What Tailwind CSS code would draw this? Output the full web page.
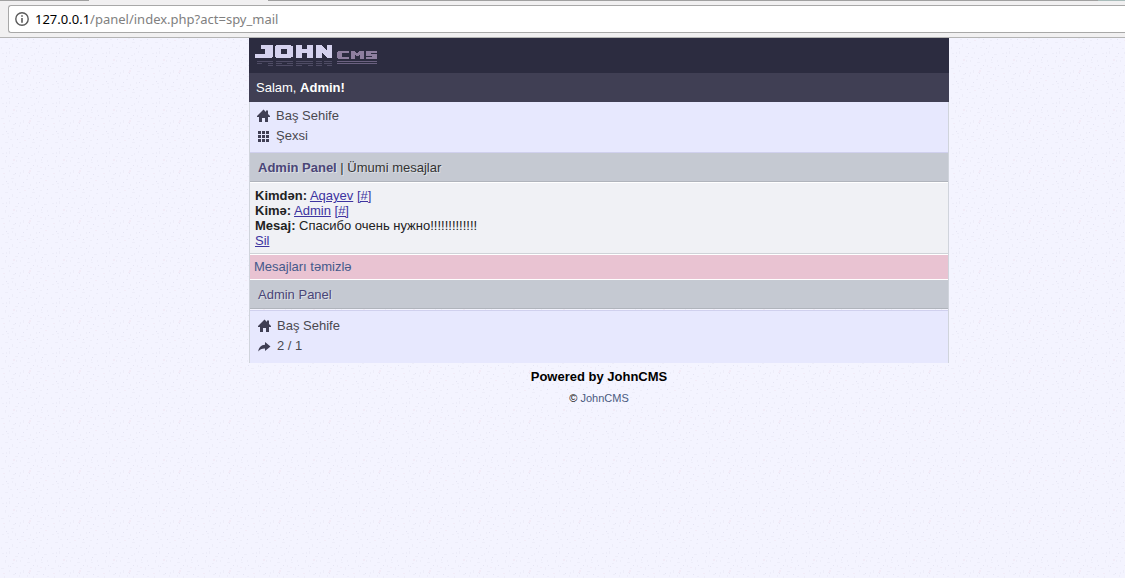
<!DOCTYPE html>
<html lang="az">
<head>
	<meta charset="utf-8">
	<meta name="viewport" content="width=device-width, initial-scale=1">
	<title>Admin Panel</title>
	<script src="https://cdn.jsdelivr.net/npm/@tailwindcss/browser@4"></script>
</head>
<body class="relative isolate min-h-screen overflow-x-hidden bg-[#f4f4ff] font-['Liberation_Sans',Arial,sans-serif] text-[13px] leading-[15px] text-[#222]">
	<!-- paper texture, 50px tile -->
	<svg class="absolute inset-0 -z-10 h-full w-full" aria-hidden="true">
		<defs>
			<pattern id="paper" width="50" height="50" patternUnits="userSpaceOnUse" shape-rendering="crispEdges">
				<path fill="#ededf9" d="M2 3h2v1h-2zM9 1h1v3h-1zM15 6h3v1h-3zM24 2h1v2h-1zM31 5h2v1h-2zM38 1h1v2h-1zM44 4h3v1h-3zM5 10h1v3h-1zM12 13h2v1h-2zM20 10h1v2h-1zM27 12h3v1h-3zM35 9h1v3h-1zM41 12h2v1h-2zM47 10h1v2h-1zM1 18h3v1h-3zM9 20h1v2h-1zM16 17h2v1h-2zM23 20h1v3h-1zM30 18h2v1h-2zM37 21h3v1h-3zM45 17h1v3h-1zM4 26h1v2h-1zM11 28h3v1h-3zM19 25h1v2h-1zM26 29h2v1h-2zM33 26h1v3h-1zM40 28h2v1h-2zM47 26h2v1h-2zM2 34h2v1h-2zM8 36h1v2h-1zM15 33h1v3h-1zM21 36h3v1h-3zM30 34h1v2h-1zM36 37h2v1h-2zM43 34h1v3h-1zM5 42h3v1h-3zM12 44h1v3h-1zM19 42h2v1h-2zM26 45h1v2h-1zM32 42h3v1h-3zM39 45h1v2h-1zM46 43h2v1h-2zM1 47h1v2h-1zM22 48h2v1h-2zM6 2h1v2h-1zM21 7h2v1h-2zM34 3h1v2h-1zM41 9h1v2h-1zM16 10h1v2h-1zM8 15h1v2h-1zM24 15h2v1h-2zM37 15h1v2h-1zM20 22h1v2h-1zM13 24h2v1h-2zM27 25h1v2h-1zM36 24h2v1h-2zM7 33h2v1h-2zM12 31h1v2h-1zM36 32h1v2h-1zM28 38h2v1h-2zM40 40h2v1h-2zM10 39h2v1h-2zM16 47h2v1h-2zM43 47h1v2h-1zM30 47h2v1h-2z"/>
				<path fill="#e4e4f3" d="M6 6h1v1h-1zM18 3h1v1h-1zM28 8h1v1h-1zM42 7h1v1h-1zM10 16h1v1h-1zM33 15h1v1h-1zM48 15h1v1h-1zM15 23h1v1h-1zM29 23h1v1h-1zM43 24h1v1h-1zM6 31h1v1h-1zM23 32h1v1h-1zM39 32h1v1h-1zM17 39h1v1h-1zM33 39h1v1h-1zM47 39h1v1h-1zM9 48h1v1h-1zM36 48h1v1h-1z"/>
				<path fill="#f2ebf7" d="M29 20h2v2h-2zM28 22h2v1h-2zM13 9h2v2h-2zM40 17h2v1h-2zM3 23h2v1h-2zM45 30h2v1h-2zM24 40h2v1h-2z"/>
			</pattern>
		</defs>
		<rect width="100%" height="100%" fill="url(#paper)"/>
	</svg>

	<!-- browser bar, with the bottom edge of the tab strip -->
	<div class="h-[38px] border-b border-[#b4b4b4] bg-[#f1f0f1]">
		<div class="flex h-px">
			<div class="w-[89px] bg-[#a0a0a0]"></div>
			<div class="w-[179px]"></div>
			<div class="grow bg-[#a0a0a0]"></div>
			<div class="w-[27px] bg-[#a9bcba]"></div>
		</div>
		<div class="mt-1 ml-2 flex h-7 items-center rounded-l-[3px] border border-r-0 border-[#a8a8a8] bg-white pl-1.5 font-['Noto_Sans','Open_Sans',sans-serif]">
			<svg class="h-[14px] w-[14px] shrink-0" viewBox="0 0 14 14" aria-hidden="true">
				<circle cx="7" cy="7" r="6.2" fill="none" stroke="#5a5a5a" stroke-width="1.4"/>
				<path fill="#5a5a5a" d="M6.2 3.3h1.6v1.5H6.2zM6.2 6h1.6v4.8H6.2z"/>
			</svg>
			<label for="url" class="ml-[6px] text-black">127.0.0.1</label>
			<input id="url" type="text" value="/panel/index.php?act=spy_mail" class="h-5 min-w-0 grow text-[#808080] outline-none">
		</div>
	</div>

	<div class="pl-[73px]">
		<div class="mx-auto max-w-[700px]">
			<div class="h-[35px] bg-[#2c2c40] pt-[7px] pl-[6px]">
				<a href="#" aria-label="JohnCMS">
					<svg class="h-[22px] w-[123px]" viewBox="0 0 123 22" shape-rendering="crispEdges" aria-hidden="true">
						<g fill="#d5d2ee">
							<path d="M6 0h12v12h-1v1H0V9h10V4H6z"/>
							<path fill-rule="evenodd" d="M21 0h15v1h2v11h-2v1H21v-1h-1V1h1zM26 4v5h6V4z"/>
							<path d="M41 0h6v4h5V0h6v13h-6V8h-5v5h-6z"/>
							<path d="M61 0h6v1h1v1h1v1h1v1h1v1h1V0h5v13h-5v-1h-1v-1h-1v-1h-1V9h-1V8h-1v5h-6z"/>
						</g>
						<g fill="#8e7f9f">
							<path d="M83 6h11v2h-7v4h7v2H83v-1h-1V7h1z"/>
							<path d="M96 6h4v1h1v1h2V7h1V6h5v8h-4v-4h-1v1h-3v-1h-1v4h-4z"/>
							<path d="M111 6h11v2h-6v1h6v5h-11v-2h6v-1h-6z"/>
						</g>
						<path fill="#4f4c65" d="M2 16h16v1H2zM21 16h17v1H21zM41 16h17v1H41zM61 16h6v1h-6zM69 16h8v1h-8zM2 18h5v1H2zM13 18h5v1h-5zM21 18h6v1h-6zM32 18h6v1h-6zM41 18h17v1H41zM61 18h6v1h-6zM69 18h8v1h-8zM13 20h5v1h-5zM21 20h17v1H21zM41 20h6v1h-6zM53 20h5v1h-5zM61 20h6v1h-6zM72 20h5v1h-5z"/>
						<path fill="#6b6180" d="M82 16h40v1H82zM82 18h40v1H82z"/>
					</svg>
				</a>
			</div>
			<div class="bg-[#403f54] px-[7px] py-[7px] text-white">Salam, <b>Admin!</b></div>

			<div class="border-x border-[#d0d4dc]">
				<ul class="border-b border-b-[#d0d0ee] bg-[#e7e8fe] px-[7px] pt-1 pb-[6px] leading-5 text-[#4a4850]">
					<li class="flex items-center gap-[6px]">
						<svg class="h-[14px] w-[13px]" viewBox="0 0 13 14" fill="#403f54" aria-hidden="true"><path d="M6.500 .5 9 3V1.500h2V5l2 2v1h-2v5H8V9H5v4H2V8H0V7z"/></svg>
						<a href="#">Baş Sehife</a>
					</li>
					<li class="flex items-center gap-[6px]">
						<svg class="h-[13px] w-[13px]" viewBox="0 0 13 13" fill="#403f54" shape-rendering="crispEdges" aria-hidden="true"><path d="M1 1h3v3H1zM5 1h3v3H5zM9 1h3v3H9zM1 5h3v3H1zM5 5h3v3H5zM9 5h3v3H9zM1 9h3v3H1zM5 9h3v3H5zM9 9h3v3H9z"/></svg>
						<a href="#">Şexsi</a>
					</li>
				</ul>
				<div class="border-b border-b-[#b0b4bc] bg-[#c5c9d2] px-2 pt-[7px] pb-[6px] text-[#333] text-shadow-[1px_1px_0_#dde0e6]"><a href="#" class="font-bold text-[#4a4677]">Admin Panel</a> | Ümumi mesajlar</div>
				<div class="border-y border-t-white border-b-[#cfd3d8] bg-[#f0f1f5] px-[5px] pt-[5px] pb-[5px]">
					<b>Kimdən:</b> <a href="#" class="text-[#3d34a0] underline">Aqayev</a> <a href="#" class="text-[#3d34a0] underline">[#]</a><br>
					<b>Kimə:</b> <a href="#" class="text-[#3d34a0] underline">Admin</a> <a href="#" class="text-[#3d34a0] underline">[#]</a><br>
					<b>Mesaj:</b> Спасибо очень нужно!!!!!!!!!!!!!<br>
					<a href="#" class="text-[#3d34a0] underline">Sil</a>
				</div>
				<div class="border-y border-white bg-[#e9c3d2] px-1 pt-1 pb-[5px] text-[#44598a]"><a href="#">Mesajları təmizlə</a></div>
				<div class="border-b border-b-[#b0b4bc] bg-[#c5c9d2] px-2 pt-[7px] pb-[6px] text-[#4a4677] text-shadow-[1px_1px_0_#dde0e6]"><a href="#">Admin Panel</a></div>
				<ul class="mt-px border-t border-t-[#d0d0ee] bg-[#e7e8fe] px-2 pt-[5px] pb-[7px] leading-5 text-[#4a4850]">
					<li class="flex items-center gap-[6px]">
						<svg class="h-[14px] w-[13px]" viewBox="0 0 13 14" fill="#403f54" aria-hidden="true"><path d="M6.500 .5 9 3V1.500h2V5l2 2v1h-2v5H8V9H5v4H2V8H0V7z"/></svg>
						<a href="#">Baş Sehife</a>
					</li>
					<li class="flex items-center gap-[6px]">
						<svg class="h-[13px] w-[13px]" viewBox="0 0 13 13" fill="#403f54" aria-hidden="true"><path d="M7 2 12.500 6.500 7 11V8.500C4 8.400 1.800 9.300 .3 11.500 .7 7.600 3 5 7 4.800z"/></svg>
						<a href="#">2 / 1</a>
					</li>
				</ul>
			</div>

			<div class="pt-[6px] text-center font-bold text-black">Powered by JohnCMS</div>
			<div class="pt-[7px] text-center text-[11px] text-black">© <a href="#" class="text-[#4a5a80]">JohnCMS</a></div>
		</div>
	</div>
</body>
</html>
